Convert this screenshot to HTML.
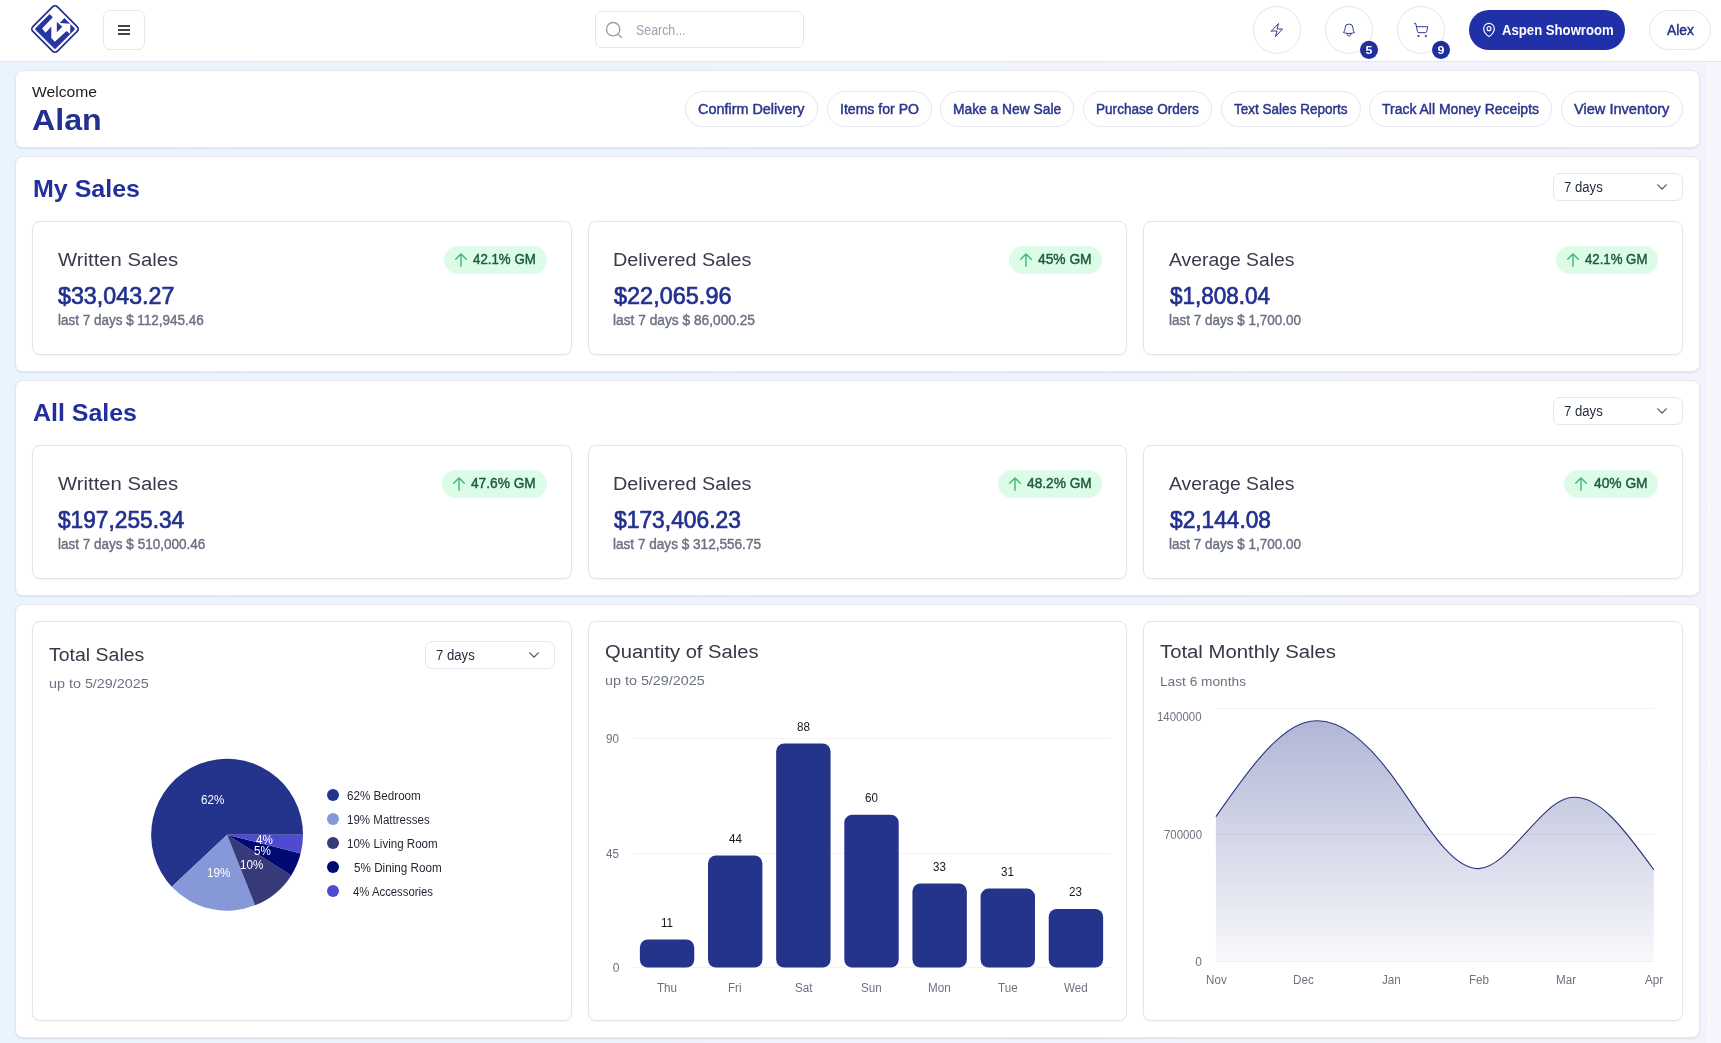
<!DOCTYPE html>
<html><head><meta charset="utf-8"><title>Dashboard</title>
<style>
html,body{margin:0;padding:0}
body{width:1721px;height:1043px;overflow:hidden;position:relative;font-family:"Liberation Sans",sans-serif;background:linear-gradient(90deg,#eaf4fe 0%,#f4f3fd 100%);}
div,svg{position:absolute;box-sizing:border-box}
#root{left:0;top:0;width:1721px;height:1043px;will-change:transform;}
.t{white-space:nowrap;line-height:1;transform-origin:0 0;}
.card{background:#fff;border:1px solid #e5e7eb;border-radius:8px;box-shadow:0 1px 3px rgba(0,0,0,.05),0 1px 2px rgba(0,0,0,.03)}
.inner{background:#fff;border:1px solid #e4e5ea;border-radius:8px;box-shadow:0 1px 2px rgba(0,0,0,.04)}
.pill{background:#fff;border:1px solid #e4e6eb;border-radius:999px}
.sel{background:#fff;border:1px solid #e4e6eb;border-radius:7px}
.badge{background:#dcfce7;border-radius:14px}
</style></head><body><div id="root">
<div style="left:0px;top:0px;width:1721px;height:62px;background:#fff;border-bottom:1px solid #e3e6ea;"></div>
<div style="left:1708px;top:62px;width:13px;height:981px;background:#f6f5fe;border-left:1px solid #fdfdff;"></div>
<svg style="left:29px;top:3px" width="52" height="52" viewBox="29 3 52 52">
<rect x="37.6" y="11.6" width="34.8" height="34.8" rx="3.5" transform="rotate(45 55 29)" fill="none" stroke="#222f86" stroke-width="1.7"/>
<rect x="40.55" y="14.55" width="28.9" height="28.9" rx="1.5" transform="rotate(45 55 29)" fill="#2535a6"/>
<polygon points="42.1,28.5 52.8,17.2 48.9,13.4 55,7.4 65.4,17.1 59.7,23.1 70.4,23.8 70.1,34.0 66.6,31.0 54.8,41.7 51.3,38.0 51.3,26.4 45.6,32.8" fill="#fff"/>
<polygon points="56.8,21.8 62.3,26.7 56.8,32.2" fill="#2535a6"/>
</svg>
<div class="sel" style="left:103px;top:10px;width:42px;height:40px;border-radius:7px;"></div>
<div style="left:118px;top:25px;width:12px;height:2px;background:#444;"></div>
<div style="left:118px;top:29px;width:12px;height:2px;background:#444;"></div>
<div style="left:118px;top:33px;width:12px;height:2px;background:#444;"></div>
<div class="sel" style="left:595px;top:11px;width:209px;height:37px;border-radius:7px;"></div>
<svg style="left:604px;top:19.5px" width="20" height="20" viewBox="0 0 24 24" fill="none" stroke="#9aa1ae" stroke-width="1.7" stroke-linecap="round" stroke-linejoin="round"><circle cx="11" cy="11" r="8"/><path d="m21 21-4.3-4.3"/></svg>
<div class="t" style="left:636.00px;top:23.05px;font-size:14px;color:#9ca3af;transform:scaleX(0.8835);">Search...</div>
<div class="pill" style="left:1253px;top:6px;width:48px;height:48px;"></div>
<div class="pill" style="left:1325px;top:6px;width:48px;height:48px;"></div>
<div class="pill" style="left:1397px;top:6px;width:48px;height:48px;"></div>
<svg style="left:1269px;top:22px" width="16" height="16" viewBox="0 0 24 24" fill="none" stroke="#2f3c96" stroke-width="1.5" stroke-linecap="round" stroke-linejoin="round"><path d="M3.75 13.5l10.5-11.25L12 10.5h8.25L9.75 21.75 12 13.5H3.75z"/></svg>
<svg style="left:1341px;top:22px" width="16" height="16" viewBox="0 0 24 24" fill="none" stroke="#2f3c96" stroke-width="1.5" stroke-linecap="round" stroke-linejoin="round"><path d="M14.857 17.082a23.848 23.848 0 005.454-1.31A8.967 8.967 0 0118 9.75v-.7V9A6 6 0 006 9v.75a8.967 8.967 0 01-2.312 6.022c1.733.64 3.56 1.085 5.455 1.31m5.714 0a24.255 24.255 0 01-5.714 0m5.714 0a3 3 0 11-5.714 0"/></svg>
<svg style="left:1413px;top:22px" width="16" height="16" viewBox="0 0 24 24" fill="none" stroke="#2f3c96" stroke-width="1.5" stroke-linecap="round" stroke-linejoin="round"><circle cx="8" cy="21" r="1"/><circle cx="19" cy="21" r="1"/><path d="M2.05 2.05h2l2.66 12.42a2 2 0 0 0 2 1.58h9.78a2 2 0 0 0 1.95-1.57l1.65-7.43H5.12"/></svg>
<svg style="left:1359px;top:39px" width="20" height="22" viewBox="1359 39 20 22"><circle cx="1369" cy="49.85" r="9.05" fill="#202e9e"/></svg>
<div class="t" style="left:1363px;top:44.63px;width:12px;text-align:center;font-size:11.3px;font-weight:700;color:#fff;transform:scaleX(1.1);transform-origin:50% 0;">5</div>
<svg style="left:1431px;top:39px" width="20" height="22" viewBox="1431 39 20 22"><circle cx="1441" cy="49.85" r="9.05" fill="#202e9e"/></svg>
<div class="t" style="left:1435px;top:44.63px;width:12px;text-align:center;font-size:11.3px;font-weight:700;color:#fff;transform:scaleX(1.1);transform-origin:50% 0;">9</div>
<div style="left:1469px;top:10px;width:156px;height:40px;background:#2030a8;border-radius:20px;"></div>
<svg style="left:1481px;top:22px" width="16" height="16" viewBox="0 0 24 24" fill="none" stroke="#fff" stroke-width="1.7" stroke-linecap="round" stroke-linejoin="round"><path d="M20 10c0 6-8 12-8 12s-8-6-8-12a8 8 0 0 1 16 0Z"/><circle cx="12" cy="10" r="3"/></svg>
<div class="t" style="left:1501.70px;top:23.35px;font-size:14px;color:#fff;font-weight:700;transform:scaleX(0.9386);">Aspen Showroom</div>
<div class="pill" style="left:1649px;top:10px;width:62px;height:40px;"></div>
<div class="t" style="left:1666.70px;top:23.35px;font-size:14px;color:#27348a;transform:scaleX(0.9914);-webkit-text-stroke:0.45px #27348a;">Alex</div>
<div class="card" style="left:15px;top:70px;width:1685px;height:78px;"></div>
<div class="t" style="left:32.20px;top:83.58px;font-size:15.5px;color:#1c1c1c;transform:scaleX(1.0106);">Welcome</div>
<div class="t" style="left:32.20px;top:105.30px;font-size:30px;color:#22308f;font-weight:700;transform:scaleX(1.0736);">Alan</div>
<div class="pill" style="left:685px;top:91px;width:132.5px;height:36px;"></div>
<div class="t" style="left:698.00px;top:101.95px;font-size:14px;color:#29368b;transform:scaleX(1.0293);-webkit-text-stroke:0.45px #29368b;">Confirm Delivery</div>
<div class="pill" style="left:826.5px;top:91px;width:105.0px;height:36px;"></div>
<div class="t" style="left:839.50px;top:101.95px;font-size:14px;color:#29368b;transform:scaleX(1.0054);-webkit-text-stroke:0.45px #29368b;">Items for PO</div>
<div class="pill" style="left:940.3px;top:91px;width:134.20000000000005px;height:36px;"></div>
<div class="t" style="left:953.30px;top:101.95px;font-size:14px;color:#29368b;transform:scaleX(0.9861);-webkit-text-stroke:0.45px #29368b;">Make a New Sale</div>
<div class="pill" style="left:1083.3px;top:91px;width:128.70000000000005px;height:36px;"></div>
<div class="t" style="left:1096.30px;top:101.95px;font-size:14px;color:#29368b;transform:scaleX(0.9705);-webkit-text-stroke:0.45px #29368b;">Purchase Orders</div>
<div class="pill" style="left:1221px;top:91px;width:139.5px;height:36px;"></div>
<div class="t" style="left:1234.00px;top:101.95px;font-size:14px;color:#29368b;transform:scaleX(0.9660);-webkit-text-stroke:0.45px #29368b;">Text Sales Reports</div>
<div class="pill" style="left:1369.2px;top:91px;width:183.0px;height:36px;"></div>
<div class="t" style="left:1382.20px;top:101.95px;font-size:14px;color:#29368b;transform:scaleX(0.9973);-webkit-text-stroke:0.45px #29368b;">Track All Money Receipts</div>
<div class="pill" style="left:1561.3px;top:91px;width:121.40000000000009px;height:36px;"></div>
<div class="t" style="left:1574.30px;top:101.95px;font-size:14px;color:#29368b;transform:scaleX(1.0418);-webkit-text-stroke:0.45px #29368b;">View Inventory</div>
<div class="card" style="left:15px;top:156px;width:1685px;height:216px;"></div>
<div class="t" style="left:33.20px;top:176.78px;font-size:24px;color:#21309a;font-weight:700;transform:scaleX(1.0416);">My Sales</div>
<div class="sel" style="left:1553px;top:173px;width:130px;height:28px;"></div>
<div class="t" style="left:1563.80px;top:179.55px;font-size:14px;color:#1f2937;transform:scaleX(0.9382);">7 days</div>
<svg style="left:1655px;top:182px" width="14" height="10" viewBox="0 0 14 10" fill="none" stroke="#4b5563" stroke-width="1.3" stroke-linecap="round" stroke-linejoin="round"><path d="M2.75 2.9 L7 7.1 L11.25 2.9"/></svg>
<div class="inner" style="left:32.0px;top:221px;width:539.67px;height:134px;"></div>
<div class="t" style="left:57.80px;top:251.16px;font-size:18px;color:#373c48;transform:scaleX(1.1264);">Written Sales</div>
<div class="t" style="left:58.20px;top:283.68px;font-size:24px;color:#22308f;transform:scaleX(0.9690);-webkit-text-stroke:0.7px #22308f;">$33,043.27</div>
<div class="t" style="left:57.80px;top:312.65px;font-size:14px;color:#6b7280;transform:scaleX(0.9622);-webkit-text-stroke:0.42px #6b7280;">last 7 days $ 112,945.46</div>
<div class="badge" style="left:443.87px;top:246px;width:102.8px;height:28px;"></div>
<svg style="left:452.8666666666666px;top:252px" width="16" height="16" viewBox="0 0 16 16" fill="none" stroke="#3fb871" stroke-width="1.4" stroke-linecap="round" stroke-linejoin="round"><path d="M8 14.2 V1.9 M2.7 7.2 L8 1.9 L13.3 7.2"/></svg>
<div class="t" style="left:473.27px;top:251.95px;font-size:14px;color:#1d5c3c;transform:scaleX(0.9495);-webkit-text-stroke:0.45px #1d5c3c;">42.1% GM</div>
<div class="inner" style="left:587.67px;top:221px;width:539.67px;height:134px;"></div>
<div class="t" style="left:613.47px;top:251.16px;font-size:18px;color:#373c48;transform:scaleX(1.0986);">Delivered Sales</div>
<div class="t" style="left:613.87px;top:283.68px;font-size:24px;color:#22308f;transform:scaleX(0.9782);-webkit-text-stroke:0.7px #22308f;">$22,065.96</div>
<div class="t" style="left:613.47px;top:312.65px;font-size:14px;color:#6b7280;transform:scaleX(0.9808);-webkit-text-stroke:0.42px #6b7280;">last 7 days $ 86,000.25</div>
<div class="badge" style="left:1008.73px;top:246px;width:93.6px;height:28px;"></div>
<svg style="left:1017.7333333333333px;top:252px" width="16" height="16" viewBox="0 0 16 16" fill="none" stroke="#3fb871" stroke-width="1.4" stroke-linecap="round" stroke-linejoin="round"><path d="M8 14.2 V1.9 M2.7 7.2 L8 1.9 L13.3 7.2"/></svg>
<div class="t" style="left:1038.13px;top:251.95px;font-size:14px;color:#1d5c3c;transform:scaleX(0.9841);-webkit-text-stroke:0.45px #1d5c3c;">45% GM</div>
<div class="inner" style="left:1143.33px;top:221px;width:539.67px;height:134px;"></div>
<div class="t" style="left:1169.13px;top:251.16px;font-size:18px;color:#373c48;transform:scaleX(1.0750);">Average Sales</div>
<div class="t" style="left:1169.53px;top:283.68px;font-size:24px;color:#22308f;transform:scaleX(0.9375);-webkit-text-stroke:0.7px #22308f;">$1,808.04</div>
<div class="t" style="left:1169.13px;top:312.65px;font-size:14px;color:#6b7280;transform:scaleX(0.9636);-webkit-text-stroke:0.42px #6b7280;">last 7 days $ 1,700.00</div>
<div class="badge" style="left:1555.6px;top:246px;width:102.4px;height:28px;"></div>
<svg style="left:1564.6px;top:252px" width="16" height="16" viewBox="0 0 16 16" fill="none" stroke="#3fb871" stroke-width="1.4" stroke-linecap="round" stroke-linejoin="round"><path d="M8 14.2 V1.9 M2.7 7.2 L8 1.9 L13.3 7.2"/></svg>
<div class="t" style="left:1585.00px;top:251.95px;font-size:14px;color:#1d5c3c;transform:scaleX(0.9435);-webkit-text-stroke:0.45px #1d5c3c;">42.1% GM</div>
<div class="card" style="left:15px;top:380px;width:1685px;height:216px;"></div>
<div class="t" style="left:33.20px;top:400.78px;font-size:24px;color:#21309a;font-weight:700;transform:scaleX(1.0394);">All Sales</div>
<div class="sel" style="left:1553px;top:397px;width:130px;height:28px;"></div>
<div class="t" style="left:1563.80px;top:403.55px;font-size:14px;color:#1f2937;transform:scaleX(0.9382);">7 days</div>
<svg style="left:1655px;top:406px" width="14" height="10" viewBox="0 0 14 10" fill="none" stroke="#4b5563" stroke-width="1.3" stroke-linecap="round" stroke-linejoin="round"><path d="M2.75 2.9 L7 7.1 L11.25 2.9"/></svg>
<div class="inner" style="left:32.0px;top:445px;width:539.67px;height:134px;"></div>
<div class="t" style="left:57.80px;top:475.16px;font-size:18px;color:#373c48;transform:scaleX(1.1264);">Written Sales</div>
<div class="t" style="left:58.20px;top:507.68px;font-size:24px;color:#22308f;transform:scaleX(0.9455);-webkit-text-stroke:0.7px #22308f;">$197,255.34</div>
<div class="t" style="left:57.80px;top:536.65px;font-size:14px;color:#6b7280;transform:scaleX(0.9655);-webkit-text-stroke:0.42px #6b7280;">last 7 days $ 510,000.46</div>
<div class="badge" style="left:441.97px;top:470px;width:104.7px;height:28px;"></div>
<svg style="left:450.96666666666664px;top:476px" width="16" height="16" viewBox="0 0 16 16" fill="none" stroke="#3fb871" stroke-width="1.4" stroke-linecap="round" stroke-linejoin="round"><path d="M8 14.2 V1.9 M2.7 7.2 L8 1.9 L13.3 7.2"/></svg>
<div class="t" style="left:471.37px;top:475.95px;font-size:14px;color:#1d5c3c;transform:scaleX(0.9782);-webkit-text-stroke:0.45px #1d5c3c;">47.6% GM</div>
<div class="inner" style="left:587.67px;top:445px;width:539.67px;height:134px;"></div>
<div class="t" style="left:613.47px;top:475.16px;font-size:18px;color:#373c48;transform:scaleX(1.0986);">Delivered Sales</div>
<div class="t" style="left:613.87px;top:507.68px;font-size:24px;color:#22308f;transform:scaleX(0.9515);-webkit-text-stroke:0.7px #22308f;">$173,406.23</div>
<div class="t" style="left:613.47px;top:536.65px;font-size:14px;color:#6b7280;transform:scaleX(0.9701);-webkit-text-stroke:0.42px #6b7280;">last 7 days $ 312,556.75</div>
<div class="badge" style="left:997.53px;top:470px;width:104.8px;height:28px;"></div>
<svg style="left:1006.5333333333334px;top:476px" width="16" height="16" viewBox="0 0 16 16" fill="none" stroke="#3fb871" stroke-width="1.4" stroke-linecap="round" stroke-linejoin="round"><path d="M8 14.2 V1.9 M2.7 7.2 L8 1.9 L13.3 7.2"/></svg>
<div class="t" style="left:1026.93px;top:475.95px;font-size:14px;color:#1d5c3c;transform:scaleX(0.9797);-webkit-text-stroke:0.45px #1d5c3c;">48.2% GM</div>
<div class="inner" style="left:1143.33px;top:445px;width:539.67px;height:134px;"></div>
<div class="t" style="left:1169.13px;top:475.16px;font-size:18px;color:#373c48;transform:scaleX(1.0750);">Average Sales</div>
<div class="t" style="left:1169.53px;top:507.68px;font-size:24px;color:#22308f;transform:scaleX(0.9459);-webkit-text-stroke:0.7px #22308f;">$2,144.08</div>
<div class="t" style="left:1169.13px;top:536.65px;font-size:14px;color:#6b7280;transform:scaleX(0.9636);-webkit-text-stroke:0.42px #6b7280;">last 7 days $ 1,700.00</div>
<div class="badge" style="left:1564.4px;top:470px;width:93.6px;height:28px;"></div>
<svg style="left:1573.4px;top:476px" width="16" height="16" viewBox="0 0 16 16" fill="none" stroke="#3fb871" stroke-width="1.4" stroke-linecap="round" stroke-linejoin="round"><path d="M8 14.2 V1.9 M2.7 7.2 L8 1.9 L13.3 7.2"/></svg>
<div class="t" style="left:1593.80px;top:475.95px;font-size:14px;color:#1d5c3c;transform:scaleX(0.9841);-webkit-text-stroke:0.45px #1d5c3c;">40% GM</div>
<div class="card" style="left:15px;top:604px;width:1685px;height:433.5px;"></div>
<div class="inner" style="left:32.0px;top:621px;width:539.67px;height:399.5px;"></div>
<div class="inner" style="left:587.67px;top:621px;width:539.67px;height:399.5px;"></div>
<div class="inner" style="left:1143.33px;top:621px;width:539.67px;height:399.5px;"></div>
<div class="t" style="left:49.30px;top:645.96px;font-size:18px;color:#343946;transform:scaleX(1.0823);">Total Sales</div>
<div class="t" style="left:49.30px;top:676.57px;font-size:13.5px;color:#6b7280;transform:scaleX(1.0625);">up to 5/29/2025</div>
<div class="sel" style="left:425px;top:641px;width:130px;height:28px;"></div>
<div class="t" style="left:435.80px;top:647.55px;font-size:14px;color:#1f2937;transform:scaleX(0.9382);">7 days</div>
<svg style="left:527px;top:650px" width="14" height="10" viewBox="0 0 14 10" fill="none" stroke="#4b5563" stroke-width="1.3" stroke-linecap="round" stroke-linejoin="round"><path d="M2.75 2.9 L7 7.1 L11.25 2.9"/></svg>
<svg style="left:140px;top:750px" width="180" height="170" viewBox="140 750 180 170"><path d="M227.1 834.7 L303.05 834.70 A75.95 75.95 0 1 0 171.73 886.69 Z" fill="#24338b" /><path d="M227.1 834.7 L171.73 886.69 A75.95 75.95 0 0 0 255.06 905.32 Z" fill="#8698d8" /><path d="M227.1 834.7 L255.06 905.32 A75.95 75.95 0 0 0 291.23 875.40 Z" fill="#363a78" /><path d="M227.1 834.7 L291.23 875.40 A75.95 75.95 0 0 0 300.66 853.59 Z" fill="#000a70" /><path d="M227.1 834.7 L300.66 853.59 A75.95 75.95 0 0 0 303.05 834.70 Z" fill="#4f4bd0" /></svg>
<div class="t" style="left:201.47px;top:794.13px;font-size:12px;color:#fff;transform:scaleX(0.9700);">62%</div>
<div class="t" style="left:207.17px;top:866.50px;font-size:12px;color:#fff;transform:scaleX(0.9700);">19%</div>
<div class="t" style="left:239.66px;top:858.70px;font-size:12px;color:#fff;transform:scaleX(0.9700);">10%</div>
<div class="t" style="left:253.54px;top:844.52px;font-size:12px;color:#fff;transform:scaleX(0.9700);">5%</div>
<div class="t" style="left:256.36px;top:834.20px;font-size:12px;color:#fff;transform:scaleX(0.9700);">4%</div>
<div style="left:326.8px;top:789.3px;width:12px;height:12px;background:#24338b;border-radius:6px;"></div>
<div class="t" style="left:347.30px;top:789.84px;font-size:12px;color:#1f2430;transform:scaleX(0.9705);">62% Bedroom</div>
<div style="left:326.8px;top:813.3px;width:12px;height:12px;background:#8698d8;border-radius:6px;"></div>
<div class="t" style="left:347.30px;top:813.84px;font-size:12px;color:#1f2430;transform:scaleX(0.9612);">19% Mattresses</div>
<div style="left:326.8px;top:837.3px;width:12px;height:12px;background:#363a78;border-radius:6px;"></div>
<div class="t" style="left:347.30px;top:837.84px;font-size:12px;color:#1f2430;transform:scaleX(0.9644);">10% Living Room</div>
<div style="left:326.8px;top:861.3px;width:12px;height:12px;background:#000a70;border-radius:6px;"></div>
<div class="t" style="left:353.50px;top:861.84px;font-size:12px;color:#1f2430;transform:scaleX(0.9740);">5% Dining Room</div>
<div style="left:326.8px;top:885.3px;width:12px;height:12px;background:#4f4bd0;border-radius:6px;"></div>
<div class="t" style="left:353.20px;top:885.84px;font-size:12px;color:#1f2430;transform:scaleX(0.9445);">4% Accessories</div>
<div class="t" style="left:605.40px;top:642.76px;font-size:18px;color:#343946;transform:scaleX(1.1198);">Quantity of Sales</div>
<div class="t" style="left:605.40px;top:673.87px;font-size:13.5px;color:#6b7280;transform:scaleX(1.0625);">up to 5/29/2025</div>
<div style="left:633px;top:737.9px;width:477px;height:1px;background:#f1f2f4;"></div>
<div class="t" style="left:606.45px;top:732.54px;font-size:12px;color:#6b7280;transform:scaleX(0.9700);">90</div>
<div style="left:633px;top:852.9px;width:477px;height:1px;background:#f1f2f4;"></div>
<div class="t" style="left:606.45px;top:847.54px;font-size:12px;color:#6b7280;transform:scaleX(0.9700);">45</div>
<div style="left:633px;top:967.0px;width:477px;height:1px;background:#f1f2f4;"></div>
<div class="t" style="left:612.73px;top:961.64px;font-size:12px;color:#6b7280;">0</div>
<div class="t" style="left:661.03px;top:916.94px;font-size:12px;color:#15171c;transform:scaleX(0.9700);">11</div>
<div class="t" style="left:657.04px;top:982.24px;font-size:12px;color:#6b7280;transform:scaleX(0.9700);">Thu</div>
<div class="t" style="left:728.74px;top:832.94px;font-size:12px;color:#15171c;transform:scaleX(0.9700);">44</div>
<div class="t" style="left:728.43px;top:982.24px;font-size:12px;color:#6b7280;transform:scaleX(0.9700);">Fri</div>
<div class="t" style="left:796.88px;top:720.93px;font-size:12px;color:#15171c;transform:scaleX(0.9700);">88</div>
<div class="t" style="left:794.62px;top:982.24px;font-size:12px;color:#6b7280;transform:scaleX(0.9700);">Sat</div>
<div class="t" style="left:865.03px;top:792.21px;font-size:12px;color:#15171c;transform:scaleX(0.9700);">60</div>
<div class="t" style="left:861.14px;top:982.24px;font-size:12px;color:#6b7280;transform:scaleX(0.9700);">Sun</div>
<div class="t" style="left:933.17px;top:860.94px;font-size:12px;color:#15171c;transform:scaleX(0.9700);">33</div>
<div class="t" style="left:928.32px;top:982.24px;font-size:12px;color:#6b7280;transform:scaleX(0.9700);">Mon</div>
<div class="t" style="left:1001.31px;top:866.03px;font-size:12px;color:#15171c;transform:scaleX(0.9700);">31</div>
<div class="t" style="left:997.97px;top:982.24px;font-size:12px;color:#6b7280;transform:scaleX(0.9700);">Tue</div>
<div class="t" style="left:1069.45px;top:886.39px;font-size:12px;color:#15171c;transform:scaleX(0.9700);">23</div>
<div class="t" style="left:1064.07px;top:982.24px;font-size:12px;color:#6b7280;transform:scaleX(0.9700);">Wed</div>
<svg style="left:630px;top:730px" width="490" height="245" viewBox="630 730 490 245"><rect x="639.87" y="939.50" width="54.4" height="28.00" rx="8" fill="#25348b"/><rect x="708.01" y="855.50" width="54.4" height="112.00" rx="8" fill="#25348b"/><rect x="776.16" y="743.49" width="54.4" height="224.01" rx="8" fill="#25348b"/><rect x="844.30" y="814.77" width="54.4" height="152.73" rx="8" fill="#25348b"/><rect x="912.44" y="883.50" width="54.4" height="84.00" rx="8" fill="#25348b"/><rect x="980.59" y="888.59" width="54.4" height="78.91" rx="8" fill="#25348b"/><rect x="1048.73" y="908.95" width="54.4" height="58.55" rx="8" fill="#25348b"/></svg>
<div class="t" style="left:1160.40px;top:642.76px;font-size:18px;color:#343946;transform:scaleX(1.1276);">Total Monthly Sales</div>
<div class="t" style="left:1160.40px;top:675.37px;font-size:13.5px;color:#6b7280;transform:scaleX(1.0142);">Last 6 months</div>
<div style="left:1215.9px;top:707.9px;width:437.9px;height:1px;background:#f1f2f4;"></div>
<div style="left:1215.9px;top:834.4px;width:437.9px;height:1px;background:#f1f2f4;"></div>
<div style="left:1215.9px;top:960.8px;width:437.9px;height:1px;background:#f1f2f4;"></div>
<div class="t" style="left:1157.30px;top:710.64px;font-size:12px;color:#6b7280;transform:scaleX(0.9525);">1400000</div>
<div class="t" style="left:1163.80px;top:829.04px;font-size:12px;color:#6b7280;transform:scaleX(0.9489);">700000</div>
<div class="t" style="left:1195.13px;top:955.54px;font-size:12px;color:#6b7280;">0</div>
<svg style="left:1200px;top:700px" width="470" height="270" viewBox="1200 700 470 270">
<defs><linearGradient id="ag" x1="0" y1="0" x2="0" y2="1"><stop offset="0" stop-color="#25348b" stop-opacity="0.36"/><stop offset="1" stop-color="#25348b" stop-opacity="0.03"/></linearGradient></defs>
<path d="M1215.90,816.60C1245.09,774.75,1274.29,732.89,1303.48,723.00C1332.67,713.11,1361.87,735.18,1391.06,774.40C1420.25,813.62,1449.45,869.99,1478.64,868.60C1507.83,867.21,1537.03,808.04,1566.22,798.60C1595.41,789.16,1624.61,829.43,1653.80,869.70L1653.80,961.3L1215.90,961.3Z" fill="url(#ag)"/>
<path d="M1215.90,816.60C1245.09,774.75,1274.29,732.89,1303.48,723.00C1332.67,713.11,1361.87,735.18,1391.06,774.40C1420.25,813.62,1449.45,869.99,1478.64,868.60C1507.83,867.21,1537.03,808.04,1566.22,798.60C1595.41,789.16,1624.61,829.43,1653.80,869.70" fill="none" stroke="#2a3480" stroke-width="1.1"/>
</svg>
<div class="t" style="left:1205.55px;top:973.54px;font-size:12px;color:#6b7280;transform:scaleX(0.9700);">Nov</div>
<div class="t" style="left:1293.13px;top:973.54px;font-size:12px;color:#6b7280;transform:scaleX(0.9700);">Dec</div>
<div class="t" style="left:1381.68px;top:973.54px;font-size:12px;color:#6b7280;transform:scaleX(0.9700);">Jan</div>
<div class="t" style="left:1468.61px;top:973.54px;font-size:12px;color:#6b7280;transform:scaleX(0.9700);">Feb</div>
<div class="t" style="left:1556.20px;top:973.54px;font-size:12px;color:#6b7280;transform:scaleX(0.9700);">Mar</div>
<div class="t" style="left:1644.74px;top:973.54px;font-size:12px;color:#6b7280;transform:scaleX(0.9700);">Apr</div>
</div></body></html>
